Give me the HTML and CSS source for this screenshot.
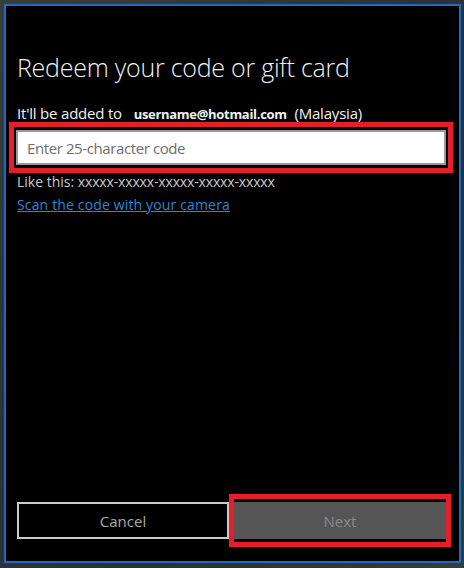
FILE: index.html
```html
<!DOCTYPE html>
<html lang="en">
<head>
<meta charset="utf-8">
<title>Redeem your code or gift card</title>
<link rel="stylesheet" href="styles.css">
</head>
<body>
<div class="screen">
  <div class="dialog">
    <div class="content">
      <h1 class="title">Redeem your code or gift card</h1>
      <p class="account">It'll be added to <b class="email">username@hotmail.com</b> (Malaysia)</p>
      <div class="field annotated annotated-field">
        <input class="code" type="text" placeholder="Enter 25-character code">
      </div>
      <p class="hint">Like this: <span class="pattern">xxxxx-xxxxx-xxxxx-xxxxx-xxxxx</span></p>
      <a class="link" href="#">Scan the code with your camera</a>
    </div>
    <div class="actions">
      <button class="btn cancel" type="button">Cancel</button>
      <div class="annotated annotated-next">
        <button class="btn next" type="button" disabled>Next</button>
      </div>
    </div>
  </div>
</div>
</body>
</html>
```
FILE: styles.css
```css
html, body {
  margin: 0;
  padding: 0;
  height: 100%;
}
body {
  background: linear-gradient(135deg, #3a3e3a 0%, #2c3238 40%, #2a3036 70%, #3a3a38 100%);
  font-family: "Segoe UI", "Open Sans", "Noto Sans", sans-serif;
  color: #fff;
}
.screen {
  box-sizing: border-box;
  height: 100%;
  padding: 4px 3px 5px 4px;
  display: flex;
}
.dialog {
  flex: 1;
  display: flex;
  flex-direction: column;
  background: #000;
  border: 2px solid #1d6cc0;
}
.content {
  flex: 1;
  display: flex;
  flex-direction: column;
  align-items: flex-start;
  padding: 45px 13px 0 10px;
}
.title {
  margin: 0 0 0 1px;
  font-size: 25px;
  line-height: 32px;
  font-weight: 300;
  letter-spacing: -0.25px;
  color: #f0f0f0;
}
.account {
  margin: 20px 0 0 1px;
  font-size: 15px;
  line-height: 20px;
  letter-spacing: -0.2px;
  color: #f2f2f2;
}
.email {
  font-weight: 700;
  font-size: 13px;
  letter-spacing: -0.3px;
  margin: 0 4px 0 8px;
}
.field {
  align-self: stretch;
  margin-top: 6px;
}
.annotated {
  position: relative;
}
.annotated::after {
  content: "";
  position: absolute;
  border: 5px solid #e41e2b;
  pointer-events: none;
}
.annotated-field::after {
  inset: -8px -7px -8px -7px;
}
.annotated-next::after {
  inset: -8px -5px -8px -5px;
}
.code {
  box-sizing: border-box;
  display: block;
  width: 100%;
  height: 35px;
  margin: 0;
  padding: 0 9px;
  border: 2px solid #999;
  background: #fff;
  font-family: inherit;
  font-size: 15px;
  letter-spacing: -0.4px;
  color: #000;
  outline: none;
}
.code::placeholder {
  color: #6e6e6e;
}
.hint {
  margin: 7px 0 0 1px;
  font-size: 14px;
  line-height: 20px;
  color: #c8c8c8;
}
.pattern {
  font-size: 14px;
  letter-spacing: -0.15px;
}
.link {
  margin: 3px 0 0 1px;
  font-size: 14px;
  line-height: 20px;
  letter-spacing: 0.15px;
  color: #2a86da;
  text-decoration: underline;
}
.actions {
  display: grid;
  grid-template-columns: 1fr 1fr;
  gap: 5px;
  padding: 0 13px 22px 11px;
}
.btn {
  box-sizing: border-box;
  width: 100%;
  height: 37px;
  margin: 0;
  font-family: inherit;
  font-size: 15px;
  cursor: default;
}
.cancel {
  background: #000;
  border: 2px solid #c9c9c9;
  color: #a9a9a9;
}
.next {
  display: block;
  background: #555;
  border: none;
  color: #8a8a8a;
}
```
